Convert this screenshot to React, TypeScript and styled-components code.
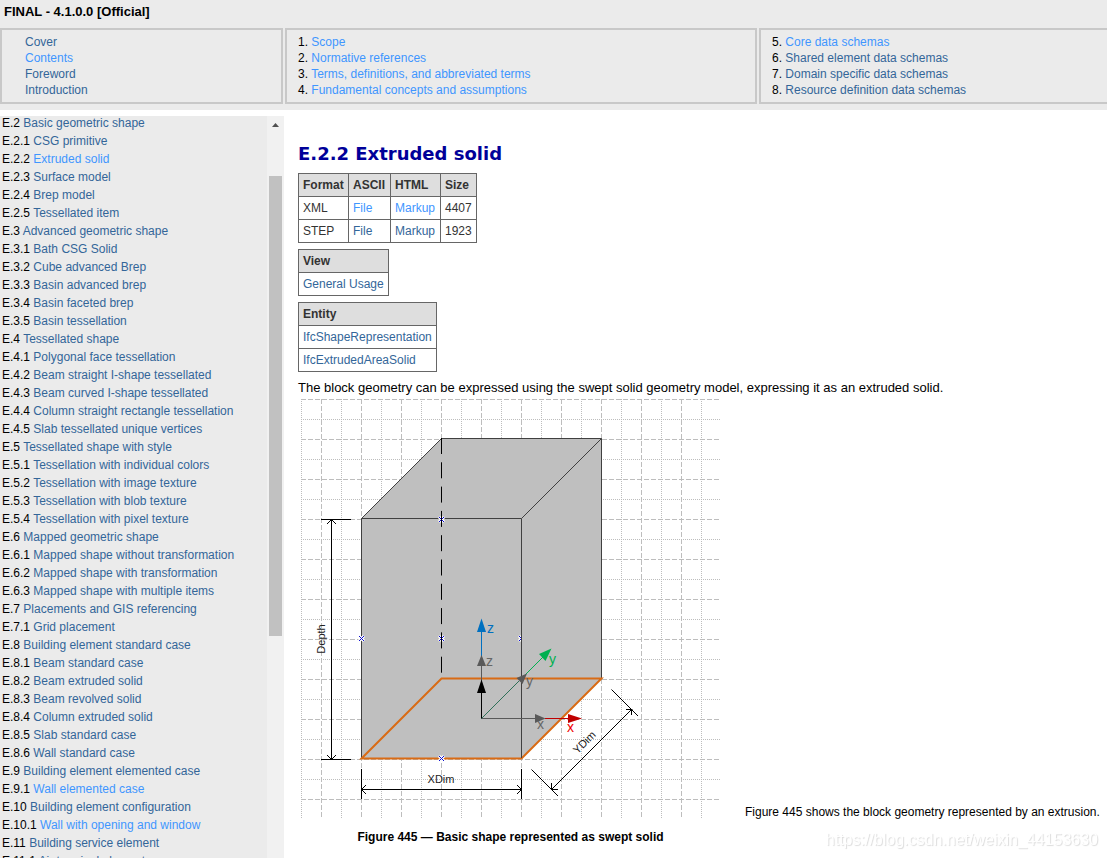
import React from "react";
import styled, { createGlobalStyle } from "styled-components";

const GlobalStyle = createGlobalStyle`
  * { box-sizing: border-box; }
  body {
    margin: 0;
    background: #fff;
    color: #000;
    font: 12px/16px "Liberation Sans", Arial, sans-serif;
  }
`;

const Page = styled.div`
  display: flex;
  flex-direction: column;
  height: 100vh;
  overflow: hidden;
`;

const Header = styled.header`
  flex: none;
  padding-bottom: 6px;
  background: #ebebeb;
`;

const Version = styled.h1`
  margin: 0;
  padding: 4px 4px 8px;
  font-size: 13px;
  line-height: 16px;
`;

const Chapters = styled.nav`
  display: grid;
  grid-template-columns: 283px 118fr 87fr;
  gap: 2px;
`;

const ChapterList = styled.ul<{ $indent: number; $open?: boolean }>`
  margin: 0;
  padding: 4px 0 4px ${(p) => p.$indent}px;
  list-style: none;
  border: 2px solid #c8c8c8;
  border-right-width: ${(p) => (p.$open ? 0 : 2)}px;
`;

const ChapterItem = styled.li`
  white-space: pre;
`;

const Link = styled.a<{ $fresh?: boolean }>`
  color: ${(p) => (p.$fresh ? "#3f96ff" : "#336699")};
  text-decoration: none;
`;

const Frames = styled.div`
  display: flex;
  flex: 1;
  min-height: 0;
  padding-top: 6px;
`;

const Sidebar = styled.aside`
  display: flex;
  flex: none;
  width: 284px;
  overflow: hidden;
  background: #ebebeb;
`;

const TocList = styled.ul`
  flex: 1;
  margin: -2px 0 0;
  padding: 0 0 0 2px;
  list-style: none;
  line-height: 18px;
`;

const ScrollTrack = styled.div`
  display: flex;
  flex-direction: column;
  align-items: center;
  flex: none;
  width: 17px;
  background: #f1f1f1;
`;

const ScrollArrow = styled.svg`
  display: block;
  width: 17px;
  height: 17px;
`;

const ScrollThumb = styled.div`
  width: 13px;
  height: 62%;
  margin-top: 43px;
  background: #c1c1c1;
`;

const Main = styled.main`
  flex: 1;
  min-width: 0;
  padding: 27px 0 0 14px;
`;

const Title = styled.h2`
  margin: 0 0 8px;
  color: #000099;
  font: bold 18px/22px "DejaVu Sans", Verdana, sans-serif;
`;

const DataTable = styled.table`
  margin: 0 0 6px;
  border-collapse: collapse;
  color: #333;
  line-height: 14px;
`;

const HeadCell = styled.th<{ $width?: number }>`
  min-width: ${(p) => (p.$width ? `${p.$width}px` : "0")};
  padding: 4px;
  border: 1px solid #666;
  background: #dedede;
  text-align: left;
`;

const Cell = styled.td`
  padding: 4px;
  border: 1px solid #666;
`;

const Paragraph = styled.p`
  margin: 8px 0 0;
  font-size: 13px;
`;

const FigureRow = styled.div`
  display: flex;
  align-items: flex-start;
  white-space: nowrap;
`;

const Figure = styled.figure`
  margin: 3px 25px 0 3px;
`;

const Drawing = styled.svg`
  display: block;
  width: 419px;
  height: 420px;
`;

const Caption = styled.figcaption`
  margin-top: 10px;
  font-weight: bold;
  text-align: center;
`;

const FigureNote = styled.p`
  align-self: flex-end;
  margin: 0 0 25px;
`;

const Watermark = styled.div`
  position: fixed;
  right: 9px;
  bottom: 8px;
  color: #fff;
  font-size: 16px;
  line-height: 20px;
  text-shadow: 1px 1px 1px #dcdcdc;
`;

type Entry = [number: string, title: string, fresh?: boolean];

const front: Entry[] = [
  ["", "Cover"],
  ["", "Contents", true],
  ["", "Foreword"],
  ["", "Introduction"],
];
const general: Entry[] = [
  ["1.", "Scope", true],
  ["2.", "Normative references", true],
  ["3.", "Terms, definitions, and abbreviated terms", true],
  ["4.", "Fundamental concepts and assumptions", true],
];
const schemas: Entry[] = [
  ["5.", "Core data schemas", true],
  ["6.", "Shared element data schemas"],
  ["7.", "Domain specific data schemas"],
  ["8.", "Resource definition data schemas"],
];
const toc: Entry[] = [
  ["E.2", "Basic geometric shape"],
  ["E.2.1", "CSG primitive"],
  ["E.2.2", "Extruded solid", true],
  ["E.2.3", "Surface model"],
  ["E.2.4", "Brep model"],
  ["E.2.5", "Tessellated item"],
  ["E.3", "Advanced geometric shape"],
  ["E.3.1", "Bath CSG Solid"],
  ["E.3.2", "Cube advanced Brep"],
  ["E.3.3", "Basin advanced brep"],
  ["E.3.4", "Basin faceted brep"],
  ["E.3.5", "Basin tessellation"],
  ["E.4", "Tessellated shape"],
  ["E.4.1", "Polygonal face tessellation"],
  ["E.4.2", "Beam straight I-shape tessellated"],
  ["E.4.3", "Beam curved I-shape tessellated"],
  ["E.4.4", "Column straight rectangle tessellation"],
  ["E.4.5", "Slab tessellated unique vertices"],
  ["E.5", "Tessellated shape with style"],
  ["E.5.1", "Tessellation with individual colors"],
  ["E.5.2", "Tessellation with image texture"],
  ["E.5.3", "Tessellation with blob texture"],
  ["E.5.4", "Tessellation with pixel texture"],
  ["E.6", "Mapped geometric shape"],
  ["E.6.1", "Mapped shape without transformation"],
  ["E.6.2", "Mapped shape with transformation"],
  ["E.6.3", "Mapped shape with multiple items"],
  ["E.7", "Placements and GIS referencing"],
  ["E.7.1", "Grid placement"],
  ["E.8", "Building element standard case"],
  ["E.8.1", "Beam standard case"],
  ["E.8.2", "Beam extruded solid"],
  ["E.8.3", "Beam revolved solid"],
  ["E.8.4", "Column extruded solid"],
  ["E.8.5", "Slab standard case"],
  ["E.8.6", "Wall standard case"],
  ["E.9", "Building element elemented case"],
  ["E.9.1", "Wall elemented case", true],
  ["E.10", "Building element configuration"],
  ["E.10.1", "Wall with opening and window", true],
  ["E.11", "Building service element"],
  ["E.11.1", "Air terminal element"],
];

function Item({ entry: [number, title, fresh] }: { entry: Entry }) {
  return (
    <ChapterItem>
      {number && number + " "}
      <Link href="#" $fresh={fresh}>
        {title}
      </Link>
    </ChapterItem>
  );
}

const gridSteps = Array.from({ length: 21 }, (_, i) => i);

/** A small selection handle: a blue cross with a white outline. */
function Handle({ x, y }: { x: number; y: number }) {
  const cross = `M${x - 2} ${y - 2}l5 5M${x + 3} ${y - 2}l-5 5`;
  return (
    <g fill="none">
      <path d={cross} stroke="#fff" strokeWidth="3" />
      <path d={cross} stroke="#1010d0" />
    </g>
  );
}

function SolidDrawing() {
  return (
    <Drawing viewBox="0 0 419 420" role="img" aria-label="Extruded solid">
      <g stroke="#bdbdbd" fill="none" shapeRendering="crispEdges">
        {gridSteps.map((i) => (
          <path
            key={`v${i}`}
            d={`M${i * 20 + 0.5} 0V419`}
            strokeDasharray={i % 2 ? "5 2" : "1 1"}
          />
        ))}
        {gridSteps.map((i) => (
          <path
            key={`h${i}`}
            d={`M0 ${i * 20 + 0.5}H419`}
            strokeDasharray={i % 2 ? "1 1" : "5 2"}
          />
        ))}
      </g>

      <path d="M60.5 119.5L140.5 39.5H300.5V279.5L220.5 359.5H60.5Z" fill="#bfbfbf" />
      <Handle x={220} y={239} />
      <path d="M221 235h5v8h-5z" fill="#bfbfbf" />
      <g stroke="#404040" fill="none">
        <path d="M60.5 359.5V119.5L140.5 39.5H300.5V279.5" />
        <path d="M60.5 119.5H220.5V359.5M220.5 119.5L300.5 39.5" />
      </g>
      <Handle x={140} y={120} />
      <Handle x={60} y={239} />
      <Handle x={140} y={239} />
      <path d="M140.5 39V279" stroke="#000" strokeDasharray="16 8.3" />

      <path
        d="M60.5 359.5L140.5 279.5H300.5L220.5 359.5Z"
        fill="none"
        stroke="#d96b14"
        strokeWidth="2"
      />
      <path d="M220.5 230V359" stroke="#404040" />
      <Handle x={140} y={359} />

      <g stroke="#000" fill="none">
        <path d="M30.5 120.5V360.5M20 120.5H50M20 360.5H50" />
        <path d="M26 125L30.5 120.5L35 125M26 356L30.5 360.5L35 356" />
        <path d="M60.5 390.5H220.5M60.5 370V400M220.5 370V400" />
        <path d="M65 386L60.5 390.5L65 395M216 386L220.5 390.5L216 395" />
        <path d="M250.5 390.5L330.5 310.5M230.5 370.5L257 397M310.5 290.5L337 317" />
        <path d="M250.5 384V390.5H257M325 310.5H331.5M330.5 310V316" />
      </g>

      <g fill="none">
        <path d="M180.5 232V257" stroke="#0070c0" />
        <path d="M180.5 267V284" stroke="#595959" />
        <path d="M180.5 293V320" stroke="#000" />
        <path d="M180.5 319.5H234" stroke="#595959" />
        <path d="M244 319.5H268" stroke="#c00000" />
        <path d="M180.5 319.5L218 282" stroke="#2f7058" />
        <path d="M224 276L243 257" stroke="#00b050" />
      </g>
      <path d="M180.5 219.5L185 233H176Z" fill="#0070c0" />
      <path d="M180.5 256L185 267H176Z" fill="#595959" />
      <path d="M180.5 280.5L185 294H176Z" fill="#000" />
      <path d="M244.5 319.5L234 315V324Z" fill="#595959" />
      <path d="M281 319.5L267 315V324Z" fill="#c00000" />
      <path d="M226 274.5L215.5 279L221.5 285Z" fill="#595959" />
      <path d="M250.5 249.5L238 255L244.5 262Z" fill="#00b050" />

      <g fontSize="14">
        <text x="186" y="234" fill="#0070c0">z</text>
        <text x="185" y="267" fill="#666">z</text>
        <text x="236" y="330" fill="#666">x</text>
        <text x="266" y="333" fill="#f00000">x</text>
        <text x="225" y="287" fill="#666">y</text>
        <text x="248" y="265" fill="#00b050">y</text>
      </g>
      <g fontSize="11" fill="#222" textAnchor="middle">
        <text x="140" y="384">XDim</text>
        <text transform="translate(24 240) rotate(-90)">Depth</text>
        <text transform="translate(286 346) rotate(-45)">YDim</text>
      </g>
    </Drawing>
  );
}

export default function App() {
  return (
    <Page>
      <GlobalStyle />
      <Header>
        <Version>FINAL - 4.1.0.0 [Official]</Version>
        <Chapters>
          <ChapterList $indent={23}>
            {front.map((e) => <Item key={e[1]} entry={e} />)}
          </ChapterList>
          <ChapterList $indent={11}>
            {general.map((e) => <Item key={e[1]} entry={e} />)}
          </ChapterList>
          <ChapterList $indent={11} $open>
            {schemas.map((e) => <Item key={e[1]} entry={e} />)}
          </ChapterList>
        </Chapters>
      </Header>
      <Frames>
        <Sidebar>
          <TocList>
            {toc.map((e) => <Item key={e[0]} entry={e} />)}
          </TocList>
          <ScrollTrack>
            <ScrollArrow viewBox="0 0 17 17">
              <path d="M5 11L8.5 7L12 11Z" fill="#505050" />
            </ScrollArrow>
            <ScrollThumb />
          </ScrollTrack>
        </Sidebar>
        <Main>
          <Title>E.2.2 Extruded solid</Title>
          <DataTable>
            <thead>
              <tr>
                <HeadCell $width={50}>Format</HeadCell>
                <HeadCell $width={42}>ASCII</HeadCell>
                <HeadCell $width={50}>HTML</HeadCell>
                <HeadCell $width={36}>Size</HeadCell>
              </tr>
            </thead>
            <tbody>
              <tr>
                <Cell>XML</Cell>
                <Cell><Link href="#" $fresh>File</Link></Cell>
                <Cell><Link href="#" $fresh>Markup</Link></Cell>
                <Cell>4407</Cell>
              </tr>
              <tr>
                <Cell>STEP</Cell>
                <Cell><Link href="#">File</Link></Cell>
                <Cell><Link href="#">Markup</Link></Cell>
                <Cell>1923</Cell>
              </tr>
            </tbody>
          </DataTable>
          <DataTable>
            <thead>
              <tr><HeadCell>View</HeadCell></tr>
            </thead>
            <tbody>
              <tr><Cell><Link href="#">General Usage</Link></Cell></tr>
            </tbody>
          </DataTable>
          <DataTable>
            <thead>
              <tr><HeadCell>Entity</HeadCell></tr>
            </thead>
            <tbody>
              <tr><Cell><Link href="#">IfcShapeRepresentation</Link></Cell></tr>
              <tr><Cell><Link href="#">IfcExtrudedAreaSolid</Link></Cell></tr>
            </tbody>
          </DataTable>
          <Paragraph>
            The block geometry can be expressed using the swept solid geometry model, expressing it as an extruded solid.
          </Paragraph>
          <FigureRow>
            <Figure>
              <SolidDrawing />
              <Caption>Figure 445 — Basic shape represented as swept solid</Caption>
            </Figure>
            <FigureNote>Figure 445 shows the block geometry represented by an extrusion.</FigureNote>
          </FigureRow>
        </Main>
      </Frames>
      <Watermark>https://blog.csdn.net/weixin_44153630</Watermark>
    </Page>
  );
}
